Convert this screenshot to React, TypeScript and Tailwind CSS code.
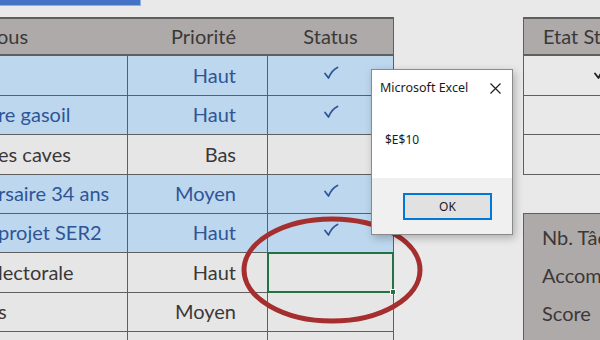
const rows = [
  { task: "", prio: "Haut", done: true, blue: true, h: "h-[40px]" },
  { task: "re gasoil", prio: "Haut", done: true, blue: true, h: "h-[39px]" },
  { task: "es caves", prio: "Bas", done: false, blue: false, h: "h-[40px]" },
  { task: "rsaire 34 ans", prio: "Moyen", done: true, blue: true, h: "h-[39px]" },
  { task: "projet SER2", prio: "Haut", done: true, blue: true, h: "h-[39px]" },
  { task: "lectorale", prio: "Haut", done: false, blue: false, h: "h-[40px]", selected: true },
  { task: "s", prio: "Moyen", done: false, blue: false, h: "h-[39px]" },
  { task: "", prio: "", done: false, blue: false, h: "h-[39px]" },
];

const Check = ({ className }: { className?: string }) => (
  <svg width="16" height="14" viewBox="0 0 16 14" className={className}>
    <path d="M2 7.5 L5.5 12 Q9 4 14.5 1.5" fill="none" stroke="currentColor" strokeWidth="1.8" strokeLinecap="round" strokeLinejoin="round" />
  </svg>
);

const TaskRow = ({ row }: { row: (typeof rows)[number] }) => {
  const bg = row.blue ? "bg-[#bdd7ee] text-[#2f5597]" : "bg-[#e7e6e6] text-[#3a3838]";

  return (
    <div className={`flex border-b border-[#5f5f5f] ${row.h} ${bg}`}>
      <div className="flex w-[128px] items-center overflow-hidden whitespace-nowrap border-r border-[#5f5f5f] pb-[2px]">
        <span className="-ml-[2px]">{row.task}</span>
      </div>
      <div className="flex w-[140px] items-center justify-end border-r border-[#5f5f5f] pr-[31px] pb-[2px]">
        {row.prio}
      </div>
      <div className="relative flex w-[126px] items-center justify-center border-r border-[#5f5f5f]">
        {row.done && <Check className="-mt-[6px] text-[#2f5597]" />}
        {row.selected && (
          <div className="absolute -top-px -left-px -right-px -bottom-px border-2 border-[#217346]">
            <div className="absolute -right-[4px] -bottom-[4px] h-[6px] w-[6px] border border-white bg-[#217346]" />
          </div>
        )}
      </div>
    </div>
  );
};

export default function App() {
  return (
    <div className="relative h-[340px] w-[600px] overflow-hidden bg-[#e9e9e9] font-[Lato,sans-serif] text-[20px]">
      <div className="h-[6px] w-[141px] border-r border-b border-[#8fb0e6] bg-[#4472c4]" />

      <div className="mt-[11px] flex items-start">
        <div className="w-[394px]">
          <div className="flex h-[39px] border-y-2 border-[#5f5f5f] bg-[#aeaaaa] text-[#3b3838]">
            <div className="flex w-[128px] items-center overflow-hidden whitespace-nowrap pb-[2px]">
              <span className="-ml-[3px]">ous</span>
            </div>
            <div className="flex w-[140px] items-center justify-end pr-[32px] pb-[2px]">Priorité</div>
            <div className="flex w-[126px] items-center justify-center border-r border-[#5f5f5f] pb-[2px]">Status</div>
          </div>
          {rows.map((row, i) => (
            <TaskRow key={i} row={row} />
          ))}
        </div>

        <div className="ml-[129px] flex-1">
          <div className="border-l border-[#5f5f5f]">
            <div className="flex h-[39px] items-center overflow-hidden whitespace-nowrap border-y-2 border-[#5f5f5f] bg-[#aeaaaa] pb-[2px] pl-[19px] text-[#3b3838]">
              Etat Statut
            </div>
            <div className="flex h-[40px] items-center overflow-hidden border-b border-[#5f5f5f] bg-[#e9e9e9] pl-[69px] text-[#1f1f1f]">
              <Check className="-mt-[6px] shrink-0" />
            </div>
            <div className="h-[39px] border-b border-[#5f5f5f] bg-[#e9e9e9]" />
            <div className="h-[40px] border-b border-[#5f5f5f] bg-[#e9e9e9]" />
          </div>

          <div className="mt-[38px] flex h-[140px] flex-col gap-[6px] overflow-hidden whitespace-nowrap border-t border-l border-[#5f5f5f] bg-[#aeaaaa] pt-[11px] pl-[18px] text-[#3b3838]">
            <div className="h-[32px] leading-[24px]">Nb. Tâches</div>
            <div className="h-[32px] leading-[24px]">Accompli</div>
            <div className="h-[32px] leading-[24px]">Score</div>
          </div>
        </div>
      </div>

      <svg className="pointer-events-none absolute top-0 left-0" width="600" height="340">
        <ellipse cx="332" cy="270" rx="88" ry="51" fill="none" stroke="#a52e2e" strokeWidth="5" />
      </svg>

      <div className="absolute top-[69px] left-[371px] flex h-[166px] w-[142px] flex-col border border-[#8a8a8a] bg-white font-['Noto_Sans',sans-serif] text-[12px] text-[#1a1a1a] shadow-[2px_3px_8px_rgba(0,0,0,0.25)]">
        <div className="flex h-[36px] items-center justify-between pr-[11px] pl-[8px] text-[12.5px]">
          <span>Microsoft Excel</span>
          <svg width="11" height="11" viewBox="0 0 11 11">
            <path d="M0.5 0.5 L10.5 10.5 M10.5 0.5 L0.5 10.5" stroke="#1a1a1a" strokeWidth="1.1" />
          </svg>
        </div>
        <div className="flex flex-1 items-center pb-[4px] pl-[13px]">$E$10</div>
        <div className="flex h-[56px] items-start bg-[#f0f0f0] pt-[15px] pl-[31px]">
          <div className="flex h-[27px] w-[89px] items-center justify-center border-2 border-[#0078d7] bg-[#e1e1e1]">
            OK
          </div>
        </div>
      </div>
    </div>
  );
}
